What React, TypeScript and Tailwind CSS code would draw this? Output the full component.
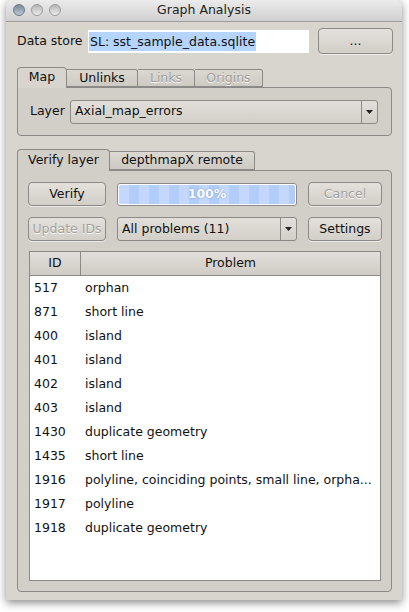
import React from "react";

const font = { fontFamily: '"DejaVu Sans", "Liberation Sans", sans-serif' };

function Btn({ children, w, disabled, h = "h-[24px]" }: { children: React.ReactNode; w: string; disabled?: boolean; h?: string }) {
  return (
    <div
      className={`${w} ${h} shrink-0 flex items-center justify-center rounded-[4px] border border-[#8c8a86] bg-gradient-to-b from-[#e4e1dc] to-[#d2cec8] text-[12.5px] shadow-[0_1px_0_rgba(255,255,255,0.6)] ${disabled ? "text-[#a3a09b] [text-shadow:0_1px_0_#fff]" : "text-[#111]"}`}
    >
      {children}
    </div>
  );
}

function Arrow() {
  return (
    <svg width="7" height="4" viewBox="0 0 7 4">
      <path d="M0 0 L7 0 L3.5 4 Z" fill="#222" />
    </svg>
  );
}

function Combo({ text, w }: { text: string; w: string }) {
  return (
    <div className={`${w} h-[24px] shrink-0 flex items-center rounded-[3px] border border-[#8c8a86] bg-gradient-to-b from-[#e2dfda] to-[#d3cfc9] text-[12.5px] text-[#111]`}>
      <div className="flex-1 pl-[4px] whitespace-nowrap overflow-hidden">{text}</div>
      <div className="w-[16px] h-full border-l border-[#8c8a86] flex items-center justify-center">
        <Arrow />
      </div>
    </div>
  );
}

const rows: [string, string][] = [
  ["517", "orphan"],
  ["871", "short line"],
  ["400", "island"],
  ["401", "island"],
  ["402", "island"],
  ["403", "island"],
  ["1430", "duplicate geometry"],
  ["1435", "short line"],
  ["1916", "polyline, coinciding points, small line, orpha..."],
  ["1917", "polyline"],
  ["1918", "duplicate geometry"],
];

export default function App() {
  return (
    <div className="w-[409px] h-[612px] bg-white relative overflow-hidden" style={font}>
      <div className="ml-[6px] w-[396px] h-[600px] flex flex-col bg-[#d8d4ce] shadow-[0_3px_8px_rgba(0,0,0,0.45)] rounded-t-[4px] overflow-hidden">
        {/* title bar */}
        <div className="h-[22px] shrink-0 relative flex items-center justify-center bg-gradient-to-b from-[#ebebeb] to-[#d0d0d0] border-b border-[#9c9c9c] rounded-t-[4px]">
          <div className="absolute left-[7px] top-[4px] flex gap-[6px]">
            <div className="w-[12px] h-[12px] rounded-full bg-gradient-to-b from-[#7d8b9a] to-[#b8c4d0] border border-[#6c7986]" />
            <div className="w-[12px] h-[12px] rounded-full bg-gradient-to-b from-[#b5b5b5] to-[#ececec] border border-[#9a9a9a]" />
            <div className="w-[12px] h-[12px] rounded-full bg-gradient-to-b from-[#b5b5b5] to-[#ececec] border border-[#9a9a9a]" />
          </div>
          <span className="text-[12.5px] text-[#222]">Graph Analysis</span>
        </div>

        <div className="flex flex-col pl-[11px] pr-[10px]">
          {/* data store row */}
          <div className="flex items-center h-[26px] mt-[6px]">
            <span className="text-[12.5px] text-[#111] w-[71px] shrink-0">Data store</span>
            <div className="w-[221px] h-[23px] bg-white flex items-center pl-[1px] shrink-0">
              <span className="bg-[#b5d5fe] text-[12.5px] text-[#111] leading-[19px] px-[1px]">SL: sst_sample_data.sqlite</span>
            </div>
            <div className="ml-[9px]">
              <Btn w="w-[75px]" h="h-[26px]">...</Btn>
            </div>
          </div>

          {/* tabs 1 */}
          <div className="mt-[12px] flex items-end h-[21px]">
            <div className="w-[50px] h-[21px] border border-b-0 border-[#8c8a86] rounded-t-[4px] bg-[#d8d4ce] flex items-center justify-center text-[12.5px] text-[#111] relative z-10 -mb-px pb-px">Map</div>
            <div className="w-[71px] h-[18px] border border-l-0 border-[#8c8a86] rounded-tr-[3px] bg-gradient-to-b from-[#dcd8d2] to-[#cdc9c3] flex items-center justify-center text-[12.5px] text-[#111]">Unlinks</div>
            <div className="w-[57px] h-[18px] border border-l-0 border-[#8c8a86] rounded-tr-[3px] bg-gradient-to-b from-[#dcd8d2] to-[#cdc9c3] flex items-center justify-center text-[12.5px] text-[#a09d98] [text-shadow:0_1px_0_#fff]">Links</div>
            <div className="w-[68px] h-[18px] border border-l-0 border-[#8c8a86] rounded-tr-[3px] bg-gradient-to-b from-[#dcd8d2] to-[#cdc9c3] flex items-center justify-center text-[12.5px] text-[#a09d98] [text-shadow:0_1px_0_#fff]">Origins</div>
          </div>
          <div className="h-[49px] border border-[#8c8a86] rounded-b-[4px] rounded-tr-[4px] bg-[#d2cec8] flex items-center pl-[12px] pr-[13px]">
            <span className="text-[12.5px] text-[#111] w-[40px] shrink-0">Layer</span>
            <Combo text="Axial_map_errors" w="flex-1" />
          </div>

          {/* tabs 2 */}
          <div className="mt-[12px] flex items-end h-[22px]">
            <div className="w-[93px] h-[22px] border border-b-0 border-[#8c8a86] rounded-t-[4px] bg-[#d2cec8] flex items-center justify-center text-[12.5px] text-[#111] relative z-10 -mb-px pb-px">Verify layer</div>
            <div className="w-[145px] h-[19px] border border-l-0 border-[#8c8a86] rounded-tr-[3px] bg-gradient-to-b from-[#dcd8d2] to-[#cdc9c3] flex items-center justify-center text-[12.5px] text-[#111]">depthmapX remote</div>
          </div>
          <div className="h-[422px] border border-[#8c8a86] rounded-b-[4px] rounded-tr-[4px] bg-[#d2cec8] flex flex-col px-[10px] pt-[11px]">
            <div className="flex items-center gap-[11px]">
              <Btn w="w-[78px]">Verify</Btn>
              <div className="w-[180px] h-[23px] shrink-0 rounded-[3px] border border-[#8c8a86] p-[1px] bg-white">
                <div
                  className="w-full h-full rounded-[2px] flex items-center justify-center text-[12.5px] font-bold text-white [text-shadow:0_0_2px_rgba(60,100,170,0.6)]"
                  style={{
                    backgroundImage:
                      "repeating-linear-gradient(90deg, #c3d8fc 0px, #c3d8fc 10px, #b2cdfa 10px, #b2cdfa 20px)",
                  }}
                >
                  100%
                </div>
              </div>
              <Btn w="w-[74px]" disabled>Cancel</Btn>
            </div>
            <div className="flex items-center gap-[11px] mt-[11px]">
              <Btn w="w-[78px]" disabled>Update IDs</Btn>
              <Combo text="All problems (11)" w="w-[180px]" />
              <Btn w="w-[74px]">Settings</Btn>
            </div>

            <div className="mt-[10px] h-[330px] border border-[#8c8a86] bg-white flex flex-col ml-px">
              <div className="h-[24px] flex bg-gradient-to-b from-[#e2dfda] to-[#cfcbc5] border-b border-[#8c8a86] text-[12.5px] text-[#111]">
                <div className="w-[51px] flex items-center justify-center border-r border-[#8c8a86]">ID</div>
                <div className="flex-1 flex items-center justify-center">Problem</div>
              </div>
              {rows.map(([id, p]) => (
                <div key={id} className="h-[24px] flex items-center text-[12.5px] text-[#111]">
                  <div className="w-[55px] pl-[4px] shrink-0">{id}</div>
                  <div className="flex-1 whitespace-nowrap overflow-hidden">{p}</div>
                </div>
              ))}
            </div>
          </div>
        </div>
      </div>
    </div>
  );
}
